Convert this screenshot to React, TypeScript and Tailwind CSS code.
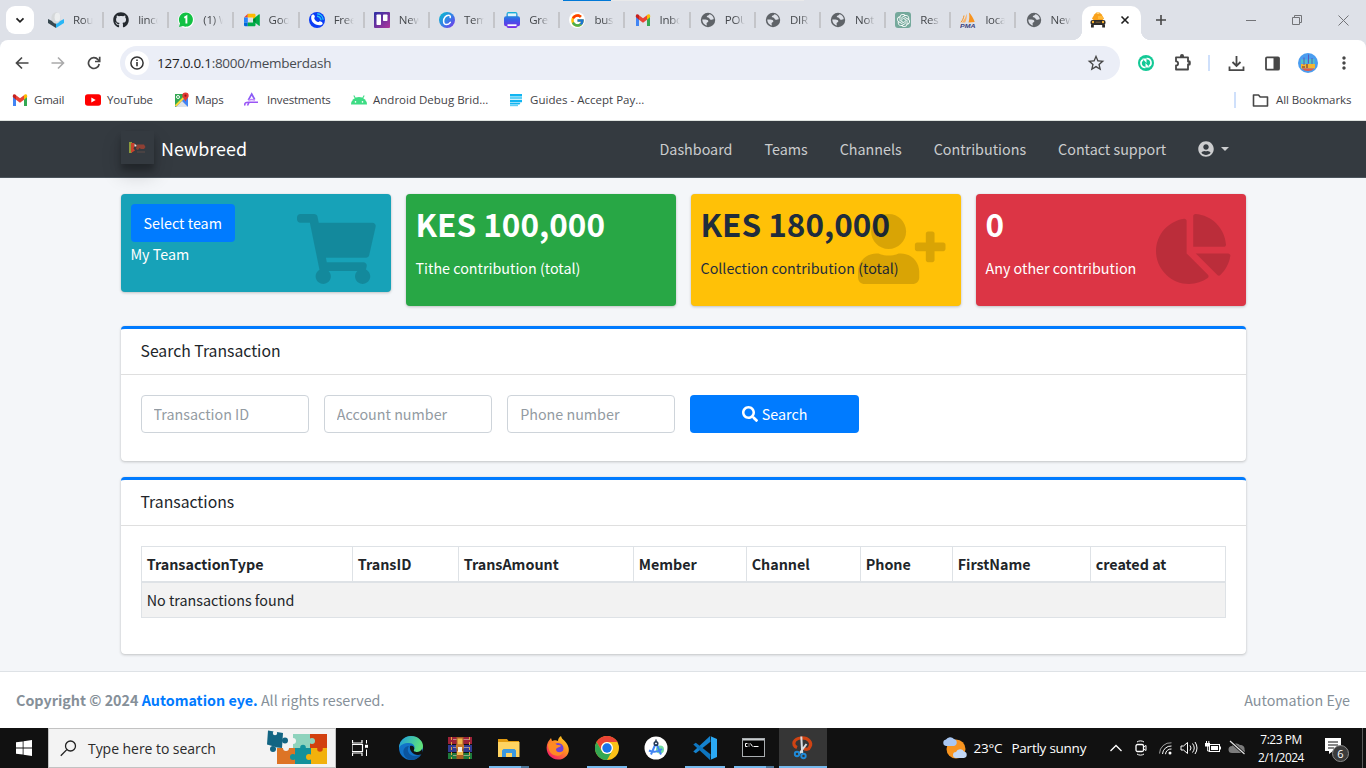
import React from "react";
import { FaShoppingCart, FaUserPlus, FaChartPie, FaUserCircle, FaSearch, FaGithub } from "react-icons/fa";
import { FcGoogle } from "react-icons/fc";
import { SiOpenai } from "react-icons/si";
import { MdStarBorder, MdMoreVert } from "react-icons/md";

type IconProps = { children: React.ReactNode; size?: number; box?: string };
const Svg = ({ children, size = 16, box = "0 0 16 16" }: IconProps) => (
  <svg width={size} height={size} viewBox={box} fill="none" className="block shrink-0">
    {children}
  </svg>
);

const RouteIcon = () => (
  <Svg>
    <path d="M0 7l8 4v5l-8-5z" fill="#37474f" />
    <path d="M16 7l-8 4v5l8-5z" fill="#29b6f6" />
    <ellipse cx="8" cy="6" rx="4.6" ry="5.8" fill="#d5d8da" />
    <ellipse cx="9.4" cy="5.2" rx="2.8" ry="4.4" fill="#eceeef" />
  </Svg>
);
const WhatsIcon = () => (
  <Svg>
    <circle cx="8" cy="8" r="8" fill="#fff" />
    <path d="M1 15l1-3.6A7 7 0 1 1 5 14z" fill="#12c143" />
    <path d="M6.300 5.800L8.400 4.500v7" stroke="#fff" strokeWidth="1.900" />
  </Svg>
);
const MeetIcon = () => (
  <Svg>
    <path d="M0 5.500L3.800 1.800V5.500z" fill="#ea4335" />
    <path d="M0 5.500h3.800v5H0z" fill="#2684fc" />
    <path d="M0 10.500h3.800v3.800H1.300A1.300 1.300 0 0 1 0 13z" fill="#0066da" />
    <path d="M3.800 1.800h6.400c.8 0 1.300.5 1.300 1.300V8L9 10V5.500H3.800z" fill="#ffba00" />
    <path d="M3.800 10.500H9V7l6-4.700c.5-.3.8 0 .8.500v10.500c0 .6-.4.8-.8.400L11.500 11v2c0 .8-.5 1.300-1.300 1.300H3.800z" fill="#00ac47" />
    <path d="M9 8l2.500-2v4.900z" fill="#00832d" />
  </Svg>
);
const CallIcon = () => (
  <Svg>
    <circle cx="8" cy="8" r="8" fill="#0b3cf5" />
    <path d="M2.500 3.500c.8-1.600 2.700-1.400 3.300.500.400 1.300-.8 1.700-.5 2.600.6 1.600 2 2.900 3.600 3.500.9.200 1.300-1 2.600-.7 2.200.600 3 2.200 1.300 3.300-3.500 1.700-10-.7-10.600-6.200-.1-1.200 0-2.200.3-3z" fill="#fff" />
    <path d="M8 4.200a4.500 4.500 0 0 1 4 4M8.200 1.800a6.500 6.500 0 0 1 6 5.900" stroke="#22c7f2" strokeWidth="1.400" />
  </Svg>
);
const TrelloIcon = () => (
  <Svg>
    <defs>
      <linearGradient id="trello" x1="0" y1="0" x2="1" y2="1">
        <stop stopColor="#2b2fa5" />
        <stop offset="1" stopColor="#b0359b" />
      </linearGradient>
    </defs>
    <rect width="16" height="16" rx="1" fill="url(#trello)" />
    <rect x="2.500" y="2.500" width="4.500" height="10.500" rx=".7" fill="#fff" />
    <rect x="9" y="2.500" width="4.500" height="6.500" rx=".7" fill="#fff" />
  </Svg>
);
const CanvaIcon = () => (
  <Svg>
    <defs>
      <linearGradient id="canva" x1="0" y1="0" x2="1" y2="1">
        <stop stopColor="#00c4cc" />
        <stop offset=".55" stopColor="#3a7be8" />
        <stop offset="1" stopColor="#7d2ae8" />
      </linearGradient>
    </defs>
    <circle cx="8" cy="8" r="8" fill="url(#canva)" />
    <path d="M11.200 5.600c.5-1.400-.4-2.400-1.700-2.400-2.600 0-4.900 2.900-4.900 5.800 0 2.200 1.200 3.600 3 3.600 1.700 0 2.900-1.100 3.700-2.200" stroke="#fff" strokeWidth="1.500" strokeLinecap="round" />
  </Svg>
);
const PrintIcon = () => (
  <Svg>
    <defs>
      <linearGradient id="prnt" x1="0" y1="0" x2="0" y2="1">
        <stop stopColor="#12b5d6" />
        <stop offset=".5" stopColor="#3a5be8" />
        <stop offset="1" stopColor="#7d2ae8" />
      </linearGradient>
    </defs>
    <path d="M4.500 0h7a2 2 0 0 1 2 2v2.200h.5a2 2 0 0 1 2 2v6a2 2 0 0 1-2 2h-.5V14a2 2 0 0 1-2 2h-7a2 2 0 0 1-2-2v.200H2a2 2 0 0 1-2-2v-6a2 2 0 0 1 2-2h.5V2a2 2 0 0 1 2-2z" fill="url(#prnt)" />
    <rect x="3.800" y="1.400" width="8.400" height="2.800" fill="#dff6fa" />
    <path d="M3.500 12.300h9v1.800h-9z" fill="#fff" />
  </Svg>
);
const GoogleIcon = () => (
  <span className="flex size-4 items-center justify-center rounded-full bg-white">
    <FcGoogle size={15} />
  </span>
);
const GmailIcon = () => (
  <Svg>
    <path d="M1 3.500V14h3V7z" fill="#4285f4" />
    <path d="M15 3.500V14h-3V7z" fill="#34a853" />
    <path d="M4 3.200v4.600L8 10.800l4-3V3.200L8 6.200z" fill="#ea4335" />
    <path d="M.8 5V4c0-1.800 1.800-2.200 3.200-1.100v4.900z" fill="#c5221f" />
    <path d="M15.200 5V4c0-1.800-1.800-2.200-3.200-1.100v4.900z" fill="#fbbc04" />
  </Svg>
);
const GlobeIcon = () => (
  <Svg>
    <circle cx="8" cy="8" r="7.200" fill="#5f6368" />
    <path d="M9.300 2.300c-.2 1.500-2.200 1-2.500 2.300-.2 1.200 1 .9 2 1.200.9.300.6 1.700 1.800 2 1.300.300 2-.5 3.200-.5-.1-2.600-1.900-4.600-4.500-5z" fill="#dee1e8" />
    <path d="M2.300 7.600c2.300-.3 4.900-.1 5.800 1 .7 1-.2 1.600-1 2-.9.500-.4 1.400-.2 2.900-2.600-.4-4.700-3-4.600-5.900z" fill="#dee1e8" />
  </Svg>
);
const OpenAiIcon = () => (
  <span className="flex size-4 items-center justify-center rounded-[3px] bg-[#75a99c] text-white">
    <SiOpenai size={13} />
  </span>
);
const PmaIcon = () => (
  <Svg>
    <path d="M6.800 1.500c.3 3.500-.3 6.500-1.600 9H1.800C4.200 8 5.800 5 6.800 1.500z" fill="#fbb267" />
    <path d="M9 .5c2.500 2.500 4.700 6 5.700 9.500l-6.200.5C9.500 7 9.500 4 9 .5z" fill="#f7931e" />
    <path d="M4 3.500C3.600 6 2.500 8.500 1 10.300" stroke="#f7931e" />
    <text x="0" y="15.800" fontSize="5.500" fontWeight="700" fontStyle="italic" fill="#3b3f7c" fontFamily="Liberation Sans" textLength="15.500" lengthAdjust="spacingAndGlyphs">PMA</text>
  </Svg>
);
const TaxiIcon = () => (
  <Svg>
    <path d="M4.500 2.200L6.500.5h3l2 1.700 2.500 4.300L12.500 8h-9L2 6.500z" fill="#f9a11b" />
    <path d="M6.700.3h2.600v1.700H6.700z" fill="#ffd074" />
    <path d="M8 4h4.300l1.300 3H8z" fill="#ffb938" />
    <rect x=".5" y="8" width="15" height="5" rx="2" fill="#2c2a29" />
    <path d="M1 12.500h2.800v3H1zM12.200 12.500H15v3h-2.800z" fill="#2c2a29" />
    <circle cx="3" cy="10" r="1.200" fill="#f9b233" />
    <circle cx="13" cy="10" r="1.200" fill="#f9b233" />
    <path d="M5.500 9.500h5V11h-5z" fill="#695233" />
  </Svg>
);

const tabs: [React.ReactNode, string][] = [
  [<RouteIcon />, "Rout"],
  [<FaGithub size={16} className="text-[#24292f]" />, "linco"],
  [<WhatsIcon />, "(1) W"],
  [<MeetIcon />, "Goo"],
  [<CallIcon />, "Free"],
  [<TrelloIcon />, "New"],
  [<CanvaIcon />, "Tem"],
  [<PrintIcon />, "Gree"],
  [<GoogleIcon />, "busi"],
  [<GmailIcon />, "Inbo"],
  [<GlobeIcon />, "POU"],
  [<GlobeIcon />, "DIR"],
  [<GlobeIcon />, "Not"],
  [<OpenAiIcon />, "Res"],
  [<PmaIcon />, "loca"],
  [<GlobeIcon />, "New"],
];

const TabStrip = () => (
  <div className="relative flex h-10 shrink-0 bg-[#dee1e8]">
    <div className="absolute top-0 left-[563px] flex h-px w-[241px] bg-[#e9e9ea]">
      <div className="h-px w-12 bg-[#0078d7]" />
    </div>
    <div className="mt-1.5 ml-1.5 flex size-7 items-center justify-center rounded-[9px] bg-white">
      <Svg size={10} box="0 0 10 10">
        <path d="M1.500 3.300L5 6.800l3.500-3.500" stroke="#1f1f1f" strokeWidth="1.700" />
      </Svg>
    </div>
    <div className="ml-1.5 flex w-[1042px]">
      {tabs.map(([icon, label], i) => (
        <div key={i} className="flex w-[65.180px] shrink-0 items-center pl-2">
          {icon}
          <span className="ml-[9px] w-[20px] overflow-hidden text-[11.500px] tracking-[-0.250px] whitespace-nowrap text-[#45484c] [mask-image:linear-gradient(to_right,#000_50%,transparent)]">
            {label}
          </span>
          {i < 15 && <span className="ml-[9px] h-4 w-[2px] bg-[#c4c5c9]" />}
        </div>
      ))}
    </div>
    <div className="relative mt-1.5 flex h-[34px] w-[59px] items-center rounded-t-[10px] bg-white pl-2">
      <div className="absolute bottom-0 -left-2.5 size-2.5 bg-[radial-gradient(circle_at_0_0,transparent_10px,#fff_10.500px)]" />
      <div className="absolute -right-2.5 bottom-0 size-2.5 bg-[radial-gradient(circle_at_100%_0,transparent_10px,#fff_10.500px)]" />
      <div className="-mt-1.5"><TaxiIcon /></div>
      <div className="-mt-1.5 ml-[14px]">
        <Svg size={10} box="0 0 10 10">
          <path d="M1.500 1.500l7 7m0-7l-7 7" stroke="#1f1f1f" strokeWidth="1.600" />
        </Svg>
      </div>
    </div>
    <div className="ml-[14px] flex flex-1 items-center">
      <Svg size={12} box="0 0 12 12">
        <path d="M6 1v10M1 6h10" stroke="#474747" strokeWidth="1.600" />
      </Svg>
      <div className="ml-[79px] flex gap-[36px] text-[#737478]">
        <Svg size={10} box="0 0 10 10"><path d="M0 5.500h10" stroke="currentColor" /></Svg>
        <Svg size={10} box="0 0 10 10">
          <path d="M.500 2.500h7v7h-7zM2.500 2.500v-2h7v7h-2" stroke="currentColor" />
        </Svg>
        <Svg size={11} box="0 0 11 11"><path d="M.500.500l10 10m0-10l-10 10" stroke="currentColor" /></Svg>
      </div>
    </div>
  </div>
);

const AddressRow = () => (
  <div className="bg-[#dee1e8]">
    <div className="flex h-[44px] items-center rounded-t-lg bg-white pt-[2px] text-[#474747]">
      <div className="ml-[15px] flex w-[105px] gap-[22px]">
        <Svg size={14} box="0 0 14 14"><path d="M13.500 7H2M7 1.500L1.500 7 7 12.500" stroke="#474747" strokeWidth="1.700" /></Svg>
        <Svg size={14} box="0 0 14 14"><path d="M.500 7H12M7 1.500L12.500 7 7 12.500" stroke="#aaaaab" strokeWidth="1.600" /></Svg>
        <Svg size={14} box="0 0 14 14">
          <path d="M12.200 8A5.400 5.400 0 1 1 11 3.600L12.500 5" stroke="#474747" strokeWidth="1.700" />
          <path d="M12.700.7v4.800H8" stroke="#474747" strokeWidth="1.700" />
        </Svg>
      </div>
      <div className="flex h-[34px] w-[1000px] items-center rounded-full bg-[#ebeef7] pr-[14px] pl-[5px]">
        <div className="flex size-6 items-center justify-center rounded-full bg-white">
          <Svg size={14} box="0 0 14 14">
            <circle cx="7" cy="7" r="6.100" stroke="#333" strokeWidth="1.500" />
            <path d="M7 6v4.300M7 3.600v1.500" stroke="#333" strokeWidth="1.600" />
          </Svg>
        </div>
        <span className="ml-2 flex-1 text-[13.500px] tracking-[-0.260px] text-[#474b50]">
          <span className="text-[#1f1f1f]">127.0.0.1</span>:8000/memberdash
        </span>
        <MdStarBorder size={20} />
      </div>
      <div className="ml-[18px]">
        <Svg>
          <circle cx="8" cy="8" r="8" fill="#13c996" />
          <path d="M7.500 12.500H7A4.200 4.200 0 0 1 5 4.700M8.500 3.500H9a4.200 4.200 0 0 1 2 7.800" stroke="#fff" strokeWidth="1.600" />
          <path d="M4.300 3.500h4.200v4.500zM11.700 12.500H7.500V8z" fill="#fff" />
        </Svg>
      </div>
      <div className="ml-5">
        <Svg size={18} box="0 0 18 18">
          <path d="M2 3.300h12v4.200h1.700v3H14v5H2v-4c2.800 0 2.800-4.200 0-4.200z" stroke="#474747" strokeWidth="1.800" strokeLinejoin="round" />
          <path d="M6 3V2a2 2 0 0 1 4 0v1zM14.500 7a2 2 0 0 1 0 4z" fill="#474747" />
        </Svg>
      </div>
      <div className="ml-[16px] h-4 w-[2px] bg-[#cfe0fb]" />
      <div className="ml-[18px]">
        <Svg size={17} box="0 0 17 17">
          <path d="M8.500 1v9.500M4.500 7l4 4 4-4M1.500 11.500v3.700h14v-3.700" stroke="#474747" strokeWidth="1.800" />
        </Svg>
      </div>
      <div className="ml-5">
        <Svg size={15} box="0 0 15 15">
          <rect x="1" y="1.300" width="13" height="12.400" rx="1" stroke="#474747" strokeWidth="1.800" />
          <path d="M8.500 1h5.500v13H8.500z" fill="#474747" />
        </Svg>
      </div>
      <div className="ml-[18px]">
        <Svg size={20} box="0 0 20 20">
          <circle cx="10" cy="10" r="10" fill="#4a9df0" />
          <path d="M3 6.500h6v4H3zM11 6h5.500v5H11z" fill="#4fc3c9" />
          <path d="M3 11h14v4.500H3z" fill="#f2b632" />
          <path d="M3.500 15.500h13a9.500 9.500 0 0 1-13 0z" fill="#e25a4a" />
          <path d="M8 11h2v4H8zM4 13h3v2H4z" fill="#a86b3a" />
          <path d="M10.500 1.500v9M6 4.500V12M14 5v6" stroke="#5b5bb5" />
        </Svg>
      </div>
      <div className="ml-[16px]"><MdMoreVert size={20} /></div>
    </div>
  </div>
);

const YoutubeIcon = () => (
  <Svg>
    <rect y="2.300" width="16" height="11.500" rx="2.800" fill="#f00" />
    <path d="M6.300 5.500v5L10.700 8z" fill="#fff" />
  </Svg>
);
const MapsIcon = () => (
  <Svg>
    <rect x="1" y="2" width="13" height="13" rx="1" fill="#4285f4" />
    <path d="M1 2h13L1 15z" fill="#34a853" />
    <path d="M2 15l6-6 6 6z" fill="#dfe3e8" />
    <path d="M1.500 14L13 2.500" stroke="#fdd835" strokeWidth="2" />
    <circle cx="4" cy="5" r="1.500" stroke="#fff" />
    <path d="M11.500.5a3.200 3.200 0 0 1 3.200 3.200c0 2.300-2.400 3-3.200 6-.8-3-3.200-3.700-3.200-6A3.200 3.200 0 0 1 11.500.5z" fill="#e53935" />
    <circle cx="11.500" cy="3.700" r="1.100" fill="#8e1b14" />
  </Svg>
);
const InvestIcon = () => (
  <Svg>
    <path d="M4.300 8.200L7.700 2l3 5.500" stroke="#8b5cf6" strokeWidth="1.700" />
    <path d="M4.500 8.200c2-.8 4.500-.8 6.500 0" stroke="#c084fc" strokeWidth="1.400" />
    <path d="M1 13.500c-.8-2.500 1-3.300 3.500-3.300H14M3.500 13.500L5 10.500" stroke="#9a55f5" strokeWidth="1.600" />
  </Svg>
);
const AndroidIcon = () => (
  <Svg>
    <path d="M0 12.500a8 7.500 0 0 1 16 0z" fill="#3ddc84" />
    <path d="M2.800 3.500L4.800 7M13.200 3.500L11.200 7" stroke="#3ddc84" strokeWidth="1.100" />
    <circle cx="4.500" cy="9.900" r=".8" fill="#fff" />
    <circle cx="11.500" cy="9.900" r=".8" fill="#fff" />
  </Svg>
);
const GuidesIcon = () => (
  <Svg>
    <path d="M2 2h12v2.500H2zM2 8h12v2.300H2z" fill="#11b5f1" />
    <path d="M2 5h12v2.300H2z" fill="#5fd0f7" />
    <path d="M2 10.800h10.500l-1 1.700H2z" fill="#11b5f1" />
    <path d="M2 12.800h8v1.400H2z" fill="#5fd0f7" />
  </Svg>
);

const BookmarkBar = () => (
  <div className="flex h-[37px] shrink-0 items-center border-b border-[#dfe3e0] bg-white pb-[4px] pl-3 text-[11.500px] tracking-[-0.200px] whitespace-nowrap text-[#3f4247]">
    <div className="flex w-[73px] items-center gap-1.5"><GmailIcon />Gmail</div>
    <div className="flex w-[89px] items-center gap-1.5"><YoutubeIcon />YouTube</div>
    <div className="flex w-[70px] items-center gap-[5px]"><MapsIcon />Maps</div>
    <div className="flex w-[107px] items-center gap-[7px]"><InvestIcon />Investments</div>
    <div className="flex w-[157px] items-center gap-1.5 tracking-[0.010px]"><AndroidIcon />Android Debug Brid...</div>
    <div className="flex items-center gap-[6px] tracking-[0.020px]"><GuidesIcon />Guides - Accept Pay...</div>
    <div className="mr-[15px] ml-auto flex items-center">
      <span className="mr-4 h-4 w-[2px] bg-[#cfe0fb]" />
      <Svg size={17} box="0 0 17 17">
        <path d="M1.500 3h5l1.700 2h7.300v9H1.500z" stroke="#474747" strokeWidth="1.600" strokeLinejoin="round" />
      </Svg>
      <span className="ml-[7px] w-[75px] tracking-[-0.100px]">All Bookmarks</span>
    </div>
  </div>
);

const Navbar = () => (
  <nav className="relative z-10 flex h-[57px] shrink-0 items-center border-b border-[#4b545c] bg-[#343a40] pl-[120.500px] text-[14.320px] text-white/75">
    <div className="-mt-[3px] flex size-[33px] justify-center bg-[#343a40] pt-[11px] shadow-[0_10px_20px_rgba(0,0,0,.19),0_6px_6px_rgba(0,0,0,.23)]">
      <svg width="18" height="12" viewBox="0 0 18 12">
        <path d="M1 0h3v11H1z" fill="#8a9a3c" />
        <path d="M3 1h3.500v3l-1 2.500 1.500 2L3 11z" fill="#c8402c" />
        <path d="M6.500 2l2 1v1.500h-2z" fill="#e8e4e0" />
        <path d="M9 2.500h7l1.500 2.500-1.500 2h-3l-1.500-1-1.500 2-2-1z" fill="#8f4034" />
        <path d="M9 10h8" stroke="#5f4a47" />
      </svg>
    </div>
    <span className="-mt-[2px] ml-[7.500px] w-[498.500px] text-[17.900px] text-white">Newbreed</span>
    <div className="flex items-center gap-8">
      <span>Dashboard</span>
      <span>Teams</span>
      <span>Channels</span>
      <span>Contributions</span>
      <span>Contact support</span>
      <span className="flex items-center">
        <FaUserCircle size={16} />
        <span className="ml-[7px] border-x-[4.500px] border-t-[4.500px] border-x-transparent border-t-current" />
      </span>
    </div>
  </nav>
);

const cardShadow = "shadow-[0_0_1px_rgba(0,0,0,.125),0_1px_3px_rgba(0,0,0,.2)]";

type BoxProps = { color: string; amount: string; label: string; icon?: React.ReactNode };
const StatBox = ({ color, amount, label, icon }: BoxProps) => (
  <div className={`relative h-[112px] w-[270px] rounded-[4px] p-2.5 ${cardShadow} ${color}`}>
    <h3 className="mb-[14px] h-[38px] text-[31.500px] leading-[38px] font-bold whitespace-nowrap">{amount}</h3>
    <p className="text-[14.320px] leading-6">{label}</p>
    <div className="absolute top-5 right-[15px] text-black/15">{icon}</div>
  </div>
);

const StatRow = () => (
  <div className="mt-4 flex h-[112px] items-start gap-[15px]">
    <div className={`relative h-[98px] w-[270px] rounded-[4px] bg-[#17a2b8] p-2.5 text-white ${cardShadow}`}>
      <button className="block h-[38px] rounded-[4px] bg-[#007bff] px-[13px] text-[14.320px] leading-6">Select team</button>
      <p className="text-[14.320px] leading-6">My Team</p>
      <div className="absolute top-5 right-[15px] text-black/15">
        <FaShoppingCart className="h-[70px] w-[78.750px]" />
      </div>
    </div>
    <StatBox color="bg-[#28a745] text-white" amount="KES 100,000" label="Tithe contribution (total)" />
    <StatBox
      color="bg-[#ffc107] text-[#1f2d3d]"
      amount="KES 180,000"
      label="Collection contribution (total)"
      icon={<FaUserPlus className="h-[70px] w-[87.500px]" />}
    />
    <StatBox
      color="bg-[#dc3545] text-white"
      amount="0"
      label="Any other contribution"
      icon={<FaChartPie className="h-[70px] w-[74.400px]" />}
    />
  </div>
);

const CardTitle = ({ children }: { children: React.ReactNode }) => (
  <div className="flex h-[46px] items-center border-b border-black/[.125] px-5 pb-[2px] text-[15.750px]">{children}</div>
);

const Field = ({ placeholder }: { placeholder: string }) => (
  <input
    placeholder={placeholder}
    className="h-[38px] w-[168.330px] rounded-[4px] border border-[#ced4da] bg-white px-3 pb-[2px] text-[14.320px] placeholder:text-[#939ba2]"
  />
);

const columns: [string, string][] = [
  ["TransactionType", "w-[211px]"],
  ["TransID", "w-[106px]"],
  ["TransAmount", "w-[175px]"],
  ["Member", "w-[113px]"],
  ["Channel", "w-[114px]"],
  ["Phone", "w-[92px]"],
  ["FirstName", "w-[138px]"],
  ["created at", "flex-1"],
];

const Page = () => (
  <main className="flex h-[493px] shrink-0 flex-col bg-[#f4f6f9] px-[120.500px] text-[#212529]">
    <StatRow />
    <section className={`mt-5 h-[135px] rounded-[4px] border-t-[3px] border-[#007bff] bg-white ${cardShadow}`}>
      <CardTitle>Search Transaction</CardTitle>
      <div className="flex gap-[15px] p-5">
        <Field placeholder="Transaction ID" />
        <Field placeholder="Account number" />
        <Field placeholder="Phone number" />
        <button className="flex h-[38px] w-[168.330px] items-center justify-center gap-1 rounded-[4px] bg-[#007bff] text-[14.320px] text-white">
          <FaSearch size={16} />
          Search
        </button>
      </div>
    </section>
    <section className={`mt-4 h-[177px] rounded-[4px] border-t-[3px] border-[#007bff] bg-white ${cardShadow}`}>
      <CardTitle>Transactions</CardTitle>
      <div className="mx-5 mt-5 border border-[#dee2e6] text-[14.320px]">
        <div className="flex h-[36px] border-b-2 border-[#dee2e6] font-bold">
          {columns.map(([name, width], i) => (
            <div key={name} className={`flex items-center pl-[5.200px] ${width} ${i < 7 ? "border-r border-[#dee2e6]" : ""}`}>
              {name}
            </div>
          ))}
        </div>
        <div className="flex h-[34px] items-center bg-[#f2f2f2] pl-[5.200px]">No transactions found</div>
      </div>
    </section>
  </main>
);

const Footer = () => (
  <footer className="flex h-[57px] shrink-0 items-center justify-between border-t border-[#dee2e6] bg-white px-4 text-[14.320px] text-[#869099]">
    <div>
      <b>Copyright © 2024 <span className="text-[#007bff]">Automation eye.</span></b> All rights reserved.
    </div>
    <div>Automation Eye</div>
  </footer>
);

const PuzzleArt = () => (
  <svg width="64" height="36" viewBox="0 0 64 36" className="block">
    <path d="M28 4h17v15H28z" fill="#8ed3bd" />
    <path d="M45 4h17v15H45z" fill="#d2400f" />
    <path d="M12 18h18v16H12z" fill="#dd7425" />
    <path d="M30 18h16v16H30z" fill="#13919b" />
    <path d="M46 18h16v16H46z" fill="#f2b10c" />
    <path d="M3 .5L18 3l-1 15-5-.5-3-1-7-2z" fill="#136583" />
    <circle cx="20" cy="10.500" r="3" fill="#136583" />
    <circle cx="8" cy="19" r="3" fill="#136583" />
    <circle cx="10" cy="3" r="2.200" fill="#f3f3f3" />
    <circle cx="47" cy="11" r="3" fill="#8ed3bd" />
    <circle cx="28" cy="27" r="3" fill="#13919b" />
    <circle cx="44" cy="27" r="3" fill="#f2b10c" />
    <circle cx="38" cy="17.500" r="2.800" fill="#13919b" />
    <circle cx="55" cy="19" r="2.800" fill="#d2400f" />
    <circle cx="21" cy="18" r="3" fill="#f3f3f3" />
    <circle cx="28" cy="11" r="3" fill="#f3f3f3" />
  </svg>
);
const EdgeIcon = () => (
  <Svg size={24} box="0 0 24 24">
    <defs>
      <linearGradient id="edge" x1="0" y1="0" x2="1" y2=".3">
        <stop stopColor="#1b9de2" />
        <stop offset="1" stopColor="#5fe07a" />
      </linearGradient>
    </defs>
    <circle cx="12" cy="12" r="12" fill="#1273c8" />
    <path d="M0 11C1 4 6 0 12 0c7 0 12 5 12 10 0 4-3 6-6 6-2 0-4-1-3-2 2-4-1-7-5-7C5 7 1 9 0 12z" fill="url(#edge)" />
    <path d="M10 10c-3 4 0 10 6 10 3 0 5-1 6-2-2 4-6 6-10 6-6-1-9-7-7-11 1-2 3-3 5-3z" fill="#0b559f" />
    <path d="M11 10c3-1 5 1 4 4-1 1 1 2 3 2 2 0 4-1 5-3l1 5-2 .5c-7 2-12-3.500-11-8.500z" fill="#111" />
  </Svg>
);
const WinrarIcon = () => (
  <Svg size={24} box="0 0 24 24">
    <path d="M0 1h24v7H0z" fill="#9c2238" />
    <path d="M0 9h24v7H0z" fill="#323b93" />
    <path d="M0 17h24v6H0z" fill="#1e7b3b" />
    <path d="M5 3.500h17M5 11.500h17M5 19.500h17" stroke="#d9c8bc" opacity=".6" />
    <path d="M3.500 1v22M21.500 1v22" stroke="#e0a23c" strokeDasharray="3 2" />
    <path d="M8.500 1h7v22h-7z" fill="#a85c22" />
    <path d="M9.500 2.500h5v6h-5zM9 15h6v4H9z" fill="#f0b94c" />
    <path d="M8 8.500h8v4H8z" fill="#c97a2a" />
    <path d="M10 11h4v5h-4z" fill="#f1eee7" />
  </Svg>
);
const FolderIcon = () => (
  <Svg size={24} box="0 0 24 24">
    <path d="M1 3h9l1.500 2H22v5H1z" fill="#e39b10" />
    <path d="M1 6h21.500v15H1z" fill="#ffd361" />
    <path d="M5 21v-6.500l1.500-1.500h11l1.500 1.500V21h-4v-4H9v4z" fill="#3b98df" />
  </Svg>
);
const FirefoxIcon = () => (
  <Svg size={24} box="0 0 24 24">
    <defs>
      <linearGradient id="fox" x1="1" y1="0" x2=".2" y2="1">
        <stop stopColor="#ffe226" />
        <stop offset=".45" stopColor="#ff9320" />
        <stop offset="1" stopColor="#f5156c" />
      </linearGradient>
    </defs>
    <path d="M2 6l3-4 1 3c2-1 4-1 6 0 0-2 1-4 3-5 1 4 4 4 6 8 5 8-1 15.500-9 15.500C3 23.500-2 14 2 6z" fill="url(#fox)" />
    <circle cx="12" cy="12.500" r="5.500" fill="#7142d8" />
    <path d="M2 8c3-3 7-2 9 1 2 0 4 0 4 1-2 2-5 1-5 4 1 3 5 3 8 0-1 5-6 7-10 5-4-1-6-6-6-11z" fill="#ff8a24" />
  </Svg>
);
const ChromeIcon = () => (
  <Svg size={24} box="0 0 24 24">
    <circle cx="12" cy="12" r="12" fill="#fbc116" />
    <path d="M1.600 6A12 12 0 0 1 22.400 6H12a6 6 0 0 0-5.200 9z" fill="#ea4335" />
    <path d="M1.600 6l5.200 9A6 6 0 0 0 12 18c2 0 3.600-.7 4.600-2L12 24A12 12 0 0 1 1.600 6z" fill="#34a853" />
    <circle cx="12" cy="12" r="6" fill="#fff" />
    <circle cx="12" cy="12" r="4.700" fill="#1a73e8" />
  </Svg>
);
const StudioIcon = () => (
  <Svg size={24} box="0 0 24 24">
    <circle cx="12" cy="12" r="11.500" fill="#fff" />
    <circle cx="16" cy="13.500" r="4" fill="#72dca1" />
    <path d="M11.500 8L7 18.500M12.500 8L17 18.500M5 14.500c5 2.500 9 1.500 13-1.500" stroke="#4285f4" strokeWidth="2" />
    <circle cx="12" cy="7.500" r="1.800" stroke="#263a52" strokeWidth="1.500" />
    <path d="M12 3.500v3" stroke="#263a52" strokeWidth="1.500" />
  </Svg>
);
const CodeIcon = () => (
  <Svg size={24} box="0 0 24 24">
    <path d="M17.500 5.800L2.800 17.200.3 15.500 17 0z" fill="#1583cf" />
    <path d="M17.500 18.200L2.800 6.800.3 8.500 17 24z" fill="#0e76c0" />
    <path d="M17 0l7 3v18l-7 3c.7-.3 1-.8 1-1.500V1.500C18 .8 17.700.3 17 0z" fill="#2ba9f4" />
  </Svg>
);
const CmdIcon = () => (
  <Svg size={24} box="0 0 24 24">
    <rect x=".5" y="2.500" width="22" height="18" fill="#050505" stroke="#a9adb0" />
    <path d="M1 3h21v1.500H1z" fill="#c8ccce" />
    <path d="M5.500 7.500H3.500v3h2M7 7.500v1m0 1v1M8.500 7.500l2 3M11.500 10.500h5" stroke="#fff" />
  </Svg>
);
const SnipIcon = () => (
  <Svg size={24} box="0 0 24 24">
    <path d="M6 11.500C0 9 3 2.500 10 2c8-.5 11 5 9 8.500-1 3-4 4-7 1" stroke="#cf4313" strokeWidth="3.200" />
    <path d="M10.300.5l.9 16.500M15.500 8L8 18" stroke="#d9dde0" strokeWidth="2" />
    <circle cx="6" cy="18" r="2.200" stroke="#1f8ad8" strokeWidth="1.900" />
    <circle cx="12.500" cy="20" r="2.200" stroke="#1f8ad8" strokeWidth="1.900" />
  </Svg>
);

const apps: [React.ReactNode, "none" | "one" | "many" | "active"][] = [
  [<EdgeIcon />, "none"],
  [<WinrarIcon />, "none"],
  [<FolderIcon />, "many"],
  [<FirefoxIcon />, "none"],
  [<ChromeIcon />, "one"],
  [<StudioIcon />, "none"],
  [<CodeIcon />, "one"],
  [<CmdIcon />, "many"],
  [<SnipIcon />, "active"],
];

const Tray = () => (
  <div className="ml-auto flex h-10 items-center text-white">
    <Svg size={26} box="0 0 26 26">
      <circle cx="14" cy="14" r="9.500" fill="#f7941f" />
      <path d="M4 11a3.300 3.300 0 0 1 0-6.500 5 5 0 0 1 8-.500 3.600 3.600 0 0 1 0 7z" fill="#a9c7f2" />
      <path d="M14 23a3 3 0 0 1 0-6 4.500 4.500 0 0 1 8-.500 3.300 3.300 0 0 1 0 6.500z" fill="#c3d8f6" />
    </Svg>
    <span className="ml-[6px] w-[38px] text-[13.500px] tracking-[-0.200px]">23°C</span>
    <span className="w-[97.500px] text-[13.500px] tracking-[-0.250px] whitespace-nowrap">Partly sunny</span>
    <Svg size={14} box="0 0 14 14"><path d="M1.500 10L7 4.500l5.500 5.500" stroke="currentColor" strokeWidth="1.300" /></Svg>
    <span className="ml-[10px]">
      <Svg>
        <rect x="3" y="4.500" width="7.500" height="7" rx="1.500" stroke="currentColor" strokeWidth="1.300" />
        <path d="M10.500 7l2.500-1.500v5L10.500 9M4 2C6 .5 9 .5 11 2M4 14c2 1.500 5 1.500 7 0" stroke="currentColor" />
      </Svg>
    </span>
    <span className="ml-[9px]">
      <Svg>
        <g stroke="currentColor" transform="translate(0 1)">
          <path d="M1.500 12.500A11 11 0 0 1 13.500 1.800" opacity=".6" />
          <path d="M4.500 13A8.500 8.500 0 0 1 13.500 5" />
          <path d="M7.500 13.200A5.500 5.500 0 0 1 13.500 8" />
        </g>
        <circle cx="12" cy="13" r="1.500" fill="currentColor" />
      </Svg>
    </span>
    <span className="ml-[6px]">
      <Svg size={18} box="0 0 18 18">
        <path d="M1 7h2.500L7.500 3.500v11L3.500 11H1z" stroke="currentColor" />
        <path d="M10 6.500q2 2.500 0 5M12.500 4.500q3.500 4.500 0 9M15 3q4 6 0 12" stroke="currentColor" />
      </Svg>
    </span>
    <span className="ml-[7px]">
      <Svg size={16}>
        <rect x="4.500" y="4.500" width="10" height="7" stroke="currentColor" />
        <path d="M6 6h7v4H6zM15 6.500h1v3h-1zM0 3h5v3.500H0z" fill="currentColor" />
        <path d="M1.500 1v3M3.800 1v3M2.700 6v5H5" stroke="currentColor" />
      </Svg>
    </span>
    <span className="ml-[7px]">
      <Svg size={18} box="0 0 18 18">
        <path d="M4 14a3.500 3.500 0 0 1 0-7 5 5 0 0 1 8-1c3 0 5 2 4.500 4.500A2.500 2.500 0 0 1 15 14z" fill="#7b7b7b" />
        <path d="M2 2l14.500 13" stroke="#111" strokeWidth="3" />
        <path d="M2 2l14.500 13" stroke="#e5e5e5" strokeWidth="1.200" />
      </Svg>
    </span>
    <div className="ml-[9px] w-[52px] pb-px text-center text-[11.900px] leading-[18px] tracking-[-0.450px] whitespace-nowrap">
      <div>7:23 PM</div>
      <div>2/1/2024</div>
    </div>
    <div className="relative ml-[17px] h-[22px] w-[26px]">
      <Svg size={17} box="0 0 17 17">
        <path d="M1 1h16v13H9l-4 3v-3H1z" fill="#fff" />
        <path d="M4 5h10M4 8h10M4 11h6" stroke="#111" />
      </Svg>
      <span className="absolute top-2 left-2 flex size-[17px] items-center justify-center rounded-full border border-[#8b8b8b] bg-[#3b3b3b] text-[11px] leading-none">6</span>
    </div>
    <div className="ml-[12px] h-10 w-px bg-[#5a5a5a]" />
    <div className="w-[3px]" />
  </div>
);

const Taskbar = () => (
  <div className="flex h-10 shrink-0 items-center bg-[#111111] font-['Open_Sans',sans-serif]">
    <div className="flex w-12 justify-center">
      <Svg><path d="M0 2.300l6.700-.9v6.100H0zM7.500 1.200L16 0v7.500H7.500zM0 8.400h6.700v6.200L0 13.700zM7.500 8.400H16V16l-8.500-1.200z" fill="#fff" /></Svg>
    </div>
    <div className="flex h-10 w-[288px] items-center border border-[#c2c2c2] bg-[#f3f3f3] pl-[11px]">
      <Svg size={17} box="0 0 17 17">
        <circle cx="10.500" cy="6" r="5" stroke="#222" strokeWidth="1.300" />
        <path d="M6.800 9.600L.8 15.800" stroke="#222" strokeWidth="1.300" />
      </Svg>
      <span className="ml-[11px] w-[177px] text-[14px] tracking-[-0.050px] whitespace-nowrap text-[#2b2b2b]">Type here to search</span>
      <PuzzleArt />
    </div>
    <div className="flex w-[51px] pl-4">
      <Svg>
        <path d="M.500 0v3h9.500V0M.500 16v-3H10v3M0 4.500h10.500v7H0z" stroke="#fff" strokeWidth="1.200" />
        <path d="M14.500 0v3.500M14.500 9.500V16" stroke="#fff" />
        <path d="M13 4.800h3v3h-3z" fill="#fff" />
      </Svg>
    </div>
    <div className="flex gap-px">
      {apps.map(([icon, state], i) => (
        <div key={i} className={`flex h-10 w-12 flex-col items-center ${state === "active" ? "bg-[#363636]" : ""}`}>
          <div className="flex h-[38px] items-center pt-0.5">{icon}</div>
          {state === "one" && <div className="h-0.5 w-10 bg-[#76b9ed]" />}
          {state === "active" && <div className="h-0.5 w-12 bg-[#76b9ed]" />}
          {state === "many" && (
            <div className="flex h-0.5 w-10">
              <div className="w-8 bg-[#76b9ed]" />
              <div className="w-2 bg-[#4c7698]" />
            </div>
          )}
        </div>
      ))}
    </div>
    <Tray />
  </div>
);

export default function App() {
  return (
    <div className="flex h-[768px] w-[1366px] flex-col overflow-hidden bg-white">
      <div className="shrink-0 font-['Open_Sans',sans-serif]">
        <TabStrip />
        <AddressRow />
        <BookmarkBar />
      </div>
      <div className="font-['Noto_Sans_CJK_SC',sans-serif]">
        <Navbar />
        <Page />
        <Footer />
      </div>
      <Taskbar />
    </div>
  );
}
